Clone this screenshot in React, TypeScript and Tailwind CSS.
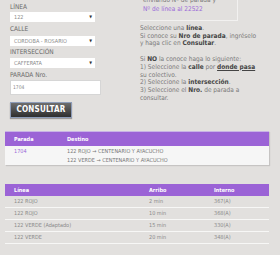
const font = { fontFamily: '"Liberation Sans Narrow", "DejaVu Sans Condensed", "Liberation Sans", sans-serif' };

function Select({ value }: { value: string }) {
  return (
    <div className="flex items-center justify-between w-[85px] h-[10px] bg-white pl-[4px] pr-[3px]">
      <span className="text-[5.5px] leading-[10px] text-[#8a8a8a]">{value}</span>
      <span className="text-[4px] leading-[10px] text-[#333]">▼</span>
    </div>
  );
}

function Label({ text, mt }: { text: string; mt: string }) {
  return <div className={`h-[10px] text-[6.5px] leading-[10px] text-[#6b6b6b] ${mt}`}>{text}</div>;
}

const destinos = ["122 ROJO → CENTENARIO Y AYACUCHO", "122 VERDE → CENTENARIO Y AYACUCHO"];

const arribos = [
  { linea: "122 ROJO", arribo: "2 min", interno: "367(A)" },
  { linea: "122 ROJO", arribo: "10 min", interno: "368(A)" },
  { linea: "122 VERDE (Adaptado)", arribo: "15 min", interno: "330(A)" },
  { linea: "122 VERDE", arribo: "20 min", interno: "348(A)" },
];

export default function App() {
  return (
    <div className="w-[280px] h-[255px] overflow-hidden bg-[#e2e0de]" style={font}>
      <div className="flex h-[125px]">
        {/* formulario */}
        <div className="w-[140px] pl-[10px]">
          <Label text="LÍNEA" mt="mt-[2px]" />
          <Select value="122" />
          <Label text="CALLE" mt="mt-[2px]" />
          <div className="mt-[2px]"><Select value="CORDOBA - ROSARIO" /></div>
          <Label text="INTERSECCIÓN" mt="mt-[1px]" />
          <div className="mt-[1px]"><Select value="CAFFERATA" /></div>
          <Label text="PARADA Nro." mt="mt-[2px]" />
          <div className="w-[91px] h-[15px] bg-white border border-[#d6d6d6] pl-[2px] text-[5px] leading-[13px] text-[#8a8a8a]">1704</div>
          <button className="mt-[6px] w-[62px] h-[16px] border border-[#8d9cb8] bg-gradient-to-b from-[#6e6e6e] to-[#2f2f2f] text-white font-bold text-[8px] leading-[14px] tracking-[0.2px] shadow-[0_1px_1px_rgba(0,0,0,0.3)]">
            CONSULTAR
          </button>
        </div>

        {/* ayuda */}
        <div className="flex-1 text-[6.5px] leading-[7.7px] text-[#7a7a7a]">
          <div className="w-[98px] h-[21px] border-r border-b border-[#f2f1f0] overflow-hidden pl-[3px]">
            <div className="-mt-[4px] h-[9px] leading-[9px]">enviando Nº de parada y</div>
            <div className="leading-[9px] text-[#9a6ad8]">Nº de línea al 22522</div>
          </div>
          <div className="mt-[4px]">Seleccione una <b className="text-[#444]">línea</b>.</div>
          <div>Si conoce su <b className="text-[#444]">Nro de parada</b>, ingréselo</div>
          <div>y haga clic en <b className="text-[#444]">Consultar</b>.</div>
          <div className="mt-[8px]">Si <b className="text-[#444]">NO</b> la conoce haga lo siguiente:</div>
          <div>1) Seleccione la <b className="text-[#444]">calle</b> por <b className="text-[#444] underline">donde pasa</b></div>
          <div>su colectivo.</div>
          <div>2) Seleccione la <b className="text-[#444]">intersección</b>.</div>
          <div>3) Seleccione el <b className="text-[#444]">Nro.</b> de parada a</div>
          <div>consultar.</div>
        </div>
      </div>

      {/* paradas */}
      <div className="mx-[5px] mt-[6px] w-[264px] shadow-[1px_1px_1px_rgba(0,0,0,0.12)]">
        <div className="flex h-[15px] bg-[#9b63d6] border-t border-[#c8b3e6] text-white font-bold text-[5.5px] leading-[14px]">
          <div className="w-[62px] pl-[9px]">Parada</div>
          <div>Destino</div>
        </div>
        <div className="flex bg-[#f6f6f6] h-[19px] pt-[1px] text-[5.5px] leading-[9px]">
          <div className="w-[62px] pl-[9px] text-[#9a6ad8]">1704</div>
          <div className="text-[#777]">
            {destinos.map((d) => (
              <div key={d}>{d}</div>
            ))}
          </div>
        </div>
      </div>

      {/* arribos */}
      <div className="mx-[5px] mt-[19px] w-[264px]">
        <div className="flex h-[12px] bg-[#9b63d6] text-white font-bold text-[5.5px] leading-[12px]">
          <div className="w-[144px] pl-[9px]">Línea</div>
          <div className="w-[65px]">Arribo</div>
          <div>Interno</div>
        </div>
        {arribos.map((a, i) => (
          <div key={i} className="flex h-[12px] border-b border-[#f7f7f6] text-[5.5px] leading-[11px] text-[#8a8a8a]">
            <div className="w-[144px] pl-[9px]">{a.linea}</div>
            <div className="w-[65px]">{a.arribo}</div>
            <div>{a.interno}</div>
          </div>
        ))}
      </div>
    </div>
  );
}
